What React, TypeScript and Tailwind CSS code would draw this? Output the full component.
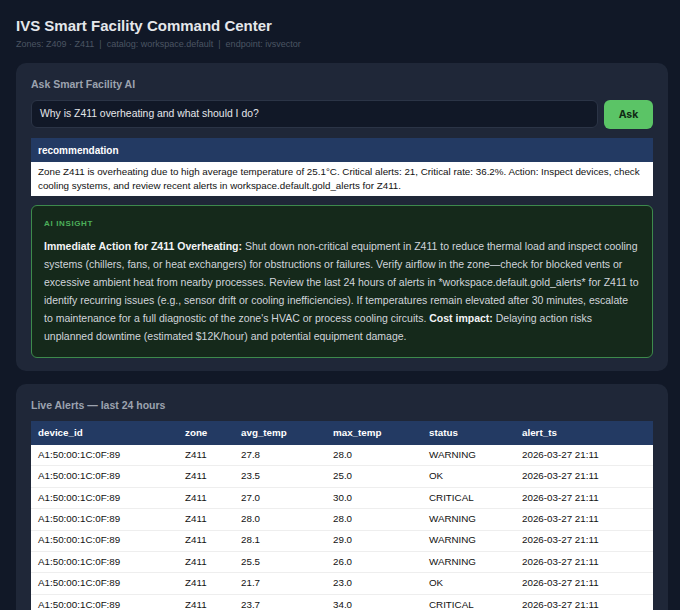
const rows = [
  ['27.8', '28.0', 'WARNING'],
  ['23.5', '25.0', 'OK'],
  ['27.0', '30.0', 'CRITICAL'],
  ['28.0', '28.0', 'WARNING'],
  ['28.1', '29.0', 'WARNING'],
  ['25.5', '26.0', 'WARNING'],
  ['21.7', '23.0', 'OK'],
  ['23.7', '34.0', 'CRITICAL'],
  ['26.4', '27.0', 'WARNING'],
]

const cols = ['w-[147px]', 'w-[56px]', 'w-[92px]', 'w-[96px]', 'w-[93px]', '']

export default function App() {
  return (
    <div className="h-[610px] overflow-hidden bg-[#111827] pl-4 pr-3 pt-[17px] font-['Liberation_Sans',Arial,sans-serif]">
      <h1 className="text-[15px] font-bold leading-[18px] text-[#e5e7eb]">IVS Smart Facility Command Center</h1>
      <p className="mt-[4px] whitespace-pre text-[9px] leading-[11px] text-[#4b5563]">
        {'Zones: Z409 · Z411  |  catalog: workspace.default  |  endpoint: ivsvector'}
      </p>

      <section className="mt-[13px] rounded-[10px] bg-[#1f2738] px-[15px] pt-[15px] pb-[13px]">
        <h2 className="text-[10.5px] font-bold leading-[13px] text-[#9ca3af]">Ask Smart Facility AI</h2>
        <div className="mt-[9px] flex gap-[6px]">
          <div className="flex h-[28px] flex-1 items-center rounded-[6px] border border-[#2b3446] bg-[#111827] px-[8px] text-[10.4px] text-[#e5e7eb]">
            Why is Z411 overheating and what should I do?
          </div>
          <button className="h-[29px] w-[49px] rounded-[6px] bg-[#5bc466] font-['Inter',sans-serif] text-[10.5px] font-bold text-[#0f2a14]">Ask</button>
        </div>

        <div className="mt-[9px]">
          <div className="flex h-[24px] items-center bg-[#233a63] px-[7px] text-[10px] font-bold text-white">recommendation</div>
          <div className="bg-white px-[7px] py-[3px] text-[9.8px] leading-[14px] text-[#111]">
            Zone Z411 is overheating due to high average temperature of 25.1°C. Critical alerts: 21, Critical rate: 36.2%. Action: Inspect devices, check cooling systems, and review recent alerts in workspace.default.gold_alerts for Z411.
          </div>
        </div>

        <div className="mt-[9px] rounded-[6px] border border-[#3d8a4c] bg-[#15291b] px-[12px] pt-[13px] pb-[12px]">
          <div className="text-[8px] font-bold leading-[10px] tracking-[0.08em] text-[#4caf5a]">AI INSIGHT</div>
          <p className="mt-[8px] text-[10.5px] leading-[18px] text-[#d1d5db]">
            <b className="text-[#f3f4f6]">Immediate Action for Z411 Overheating:</b> Shut down non-critical equipment in Z411 to reduce thermal load and inspect cooling systems (chillers, fans, or heat exchangers) for obstructions or failures. Verify airflow in the zone—check for blocked vents or excessive ambient heat from nearby processes. Review the last 24 hours of alerts in *workspace.default.gold_alerts* for Z411 to identify recurring issues (e.g., sensor drift or cooling inefficiencies). If temperatures remain elevated after 30 minutes, escalate {'to\u00a0maintenance'} for a full diagnostic of the zone's HVAC or process cooling circuits. <b className="text-[#f3f4f6]">Cost impact:</b> Delaying action risks unplanned downtime (estimated $12K/hour) and potential equipment damage.
          </p>
        </div>
      </section>

      <section className="mt-[13px] rounded-[10px] bg-[#1f2738] px-[15px] pt-[15px] pb-[14px]">
        <h2 className="text-[10.5px] font-bold leading-[13px] text-[#9ca3af]">Live Alerts — last 24 hours</h2>
        <div className="mt-[9px] text-[9.8px]">
          <div className="flex h-[24px] items-center bg-[#233a63] px-[7px] font-bold text-white">
            {['device_id', 'zone', 'avg_temp', 'max_temp', 'status', 'alert_ts'].map((h, i) => (
              <div key={h} className={cols[i]}>{h}</div>
            ))}
          </div>
          <div className="bg-white">
            {rows.map((r, i) => (
              <div key={i} className="flex h-[21.4px] items-center border-b border-[#eeeeee] px-[7px] text-[#111]">
                <div className={cols[0]}>A1:50:00:1C:0F:89</div>
                <div className={cols[1]}>Z411</div>
                <div className={cols[2]}>{r[0]}</div>
                <div className={cols[3]}>{r[1]}</div>
                <div className={cols[4]}>{r[2]}</div>
                <div>2026-03-27 21:11</div>
              </div>
            ))}
          </div>
        </div>
      </section>
    </div>
  )
}
